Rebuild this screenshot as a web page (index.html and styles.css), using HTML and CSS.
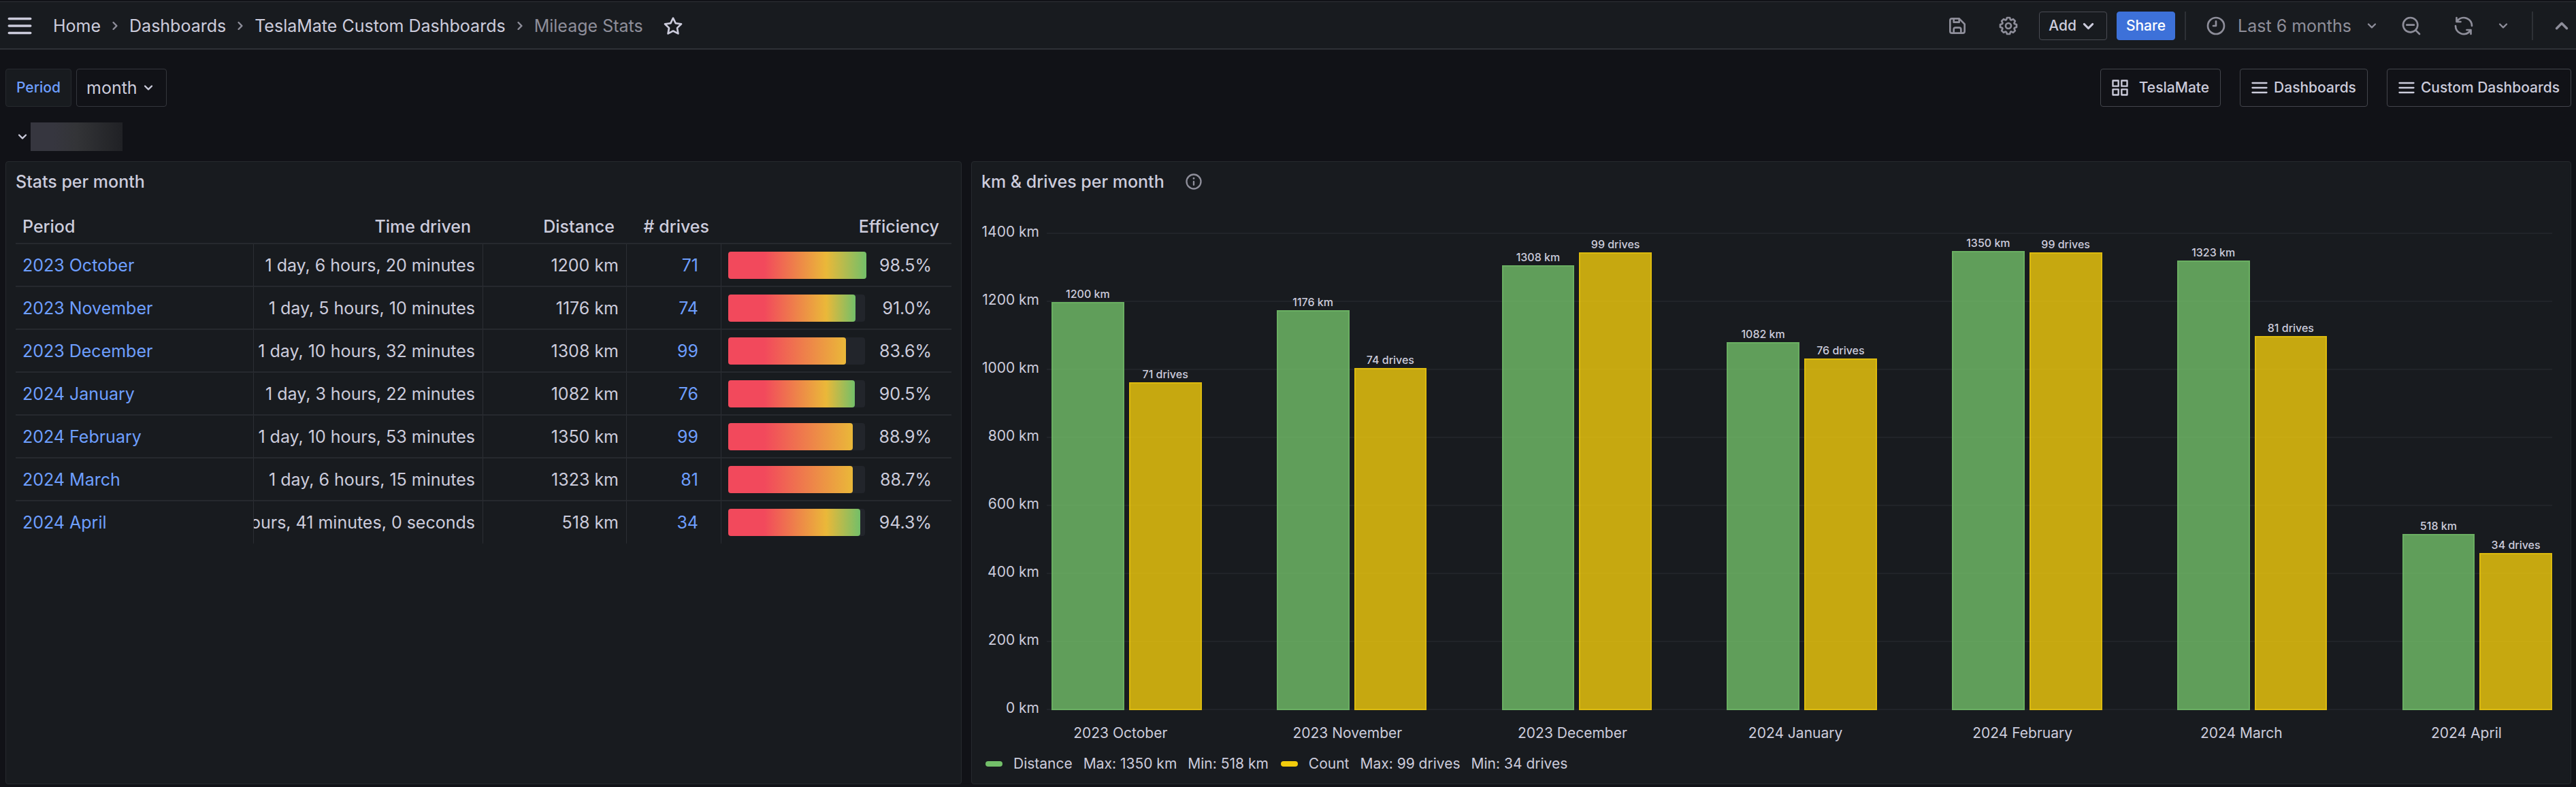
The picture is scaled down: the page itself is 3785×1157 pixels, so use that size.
FILE: index.html
```html
<!DOCTYPE html>
<html lang="en">
<head>
<meta charset="utf-8">
<meta name="viewport" content="width=device-width, initial-scale=1">
<title>Mileage Stats - TeslaMate Custom Dashboards</title>
<link rel="stylesheet" href="styles.css">
</head>
<body>
<svg class="sprite" aria-hidden="true">
  <symbol id="bars" viewBox="0 0 24 24"><path d="M3 5h18a1 1 0 0 1 0 2H3a1 1 0 0 1 0-2ZM3 11h18a1 1 0 0 1 0 2H3a1 1 0 0 1 0-2ZM3 17h18a1 1 0 0 1 0 2H3a1 1 0 0 1 0-2Z"/></symbol>
  <symbol id="down" viewBox="0 0 24 24"><path d="M17,9.17a1,1,0,0,0-1.41,0L12,12.71,8.46,9.17a1,1,0,0,0-1.41,0,1,1,0,0,0,0,1.42l4.24,4.24a1,1,0,0,0,1.42,0L17,10.59A1,1,0,0,0,17,9.17Z"/></symbol>
  <symbol id="up" viewBox="0 0 24 24"><path d="M17,13.41,12.71,9.17a1,1,0,0,0-1.42,0L7.05,13.41a1,1,0,0,0,0,1.42,1,1,0,0,0,1.41,0L12,11.29l3.54,3.54a1,1,0,0,0,.7.29,1,1,0,0,0,.71-.29A1,1,0,0,0,17,13.41Z"/></symbol>
  <symbol id="right" viewBox="0 0 24 24"><path d="M14.83,11.29,10.59,7.05a1,1,0,0,0-1.42,0,1,1,0,0,0,0,1.41L12.71,12,9.17,15.54a1,1,0,0,0,0,1.41,1,1,0,0,0,.71.29,1,1,0,0,0,.71-.29l4.24-4.24A1,1,0,0,0,14.83,11.29Z"/></symbol>
  <symbol id="star" viewBox="0 0 24 24"><path d="M22,9.67A1,1,0,0,0,21.14,9l-5.69-.83L12.9,3a1,1,0,0,0-1.8,0L8.55,8.16,2.86,9a1,1,0,0,0-.81.68,1,1,0,0,0,.25,1l4.13,4-1,5.68A1,1,0,0,0,6.9,21.44L12,18.77l5.1,2.67a.93.93,0,0,0,.46.12,1,1,0,0,0,.59-.19,1,1,0,0,0,.4-1l-1-5.68,4.13-4A1,1,0,0,0,22,9.67Zm-6.15,4a1,1,0,0,0-.29.88l.72,4.2-3.76-2a1.06,1.06,0,0,0-.94,0l-3.76,2,.72-4.2a1,1,0,0,0-.29-.88l-3-3,4.21-.61a1,1,0,0,0,.76-.55L12,5.7l1.88,3.82a1,1,0,0,0,.76.55l4.21.61Z"/></symbol>
  <symbol id="save" viewBox="0 0 24 24"><path d="M20.71,9.29l-6-6a1,1,0,0,0-.32-.21A1.09,1.09,0,0,0,14,3H6A3,3,0,0,0,3,6V18a3,3,0,0,0,3,3H18a3,3,0,0,0,3-3V10A1,1,0,0,0,20.71,9.29ZM9,5h4V7H9Zm6,14H9V16a1,1,0,0,1,1-1h4a1,1,0,0,1,1,1Zm4-1a1,1,0,0,1-1,1H17V16a3,3,0,0,0-3-3H10a3,3,0,0,0-3,3v3H6a1,1,0,0,1-1-1V6A1,1,0,0,1,6,5H7V8A1,1,0,0,0,8,9h6a1,1,0,0,0,1-1V6.41l4,4Z"/></symbol>
  <symbol id="cog" viewBox="0 0 24 24"><path d="M21.32,9.55l-1.89-.63.89-1.78A1,1,0,0,0,20.13,6L18,3.87a1,1,0,0,0-1.15-.19l-1.78.89-.63-1.89A1,1,0,0,0,13.5,2h-3a1,1,0,0,0-.95.68L8.92,4.57,7.14,3.68A1,1,0,0,0,6,3.87L3.87,6a1,1,0,0,0-.19,1.15l.89,1.78-1.89.63A1,1,0,0,0,2,10.5v3a1,1,0,0,0,.68.95l1.89.63-.89,1.78A1,1,0,0,0,3.87,18L6,20.13a1,1,0,0,0,1.15.19l1.78-.89.63,1.89a1,1,0,0,0,.95.68h3a1,1,0,0,0,.95-.68l.63-1.89,1.78.89A1,1,0,0,0,18,20.13L20.13,18a1,1,0,0,0,.19-1.15l-.89-1.78,1.89-.63A1,1,0,0,0,22,13.5v-3A1,1,0,0,0,21.32,9.55ZM20,12.78l-1.2.4A2,2,0,0,0,17.64,16l.57,1.14-1.1,1.1L16,17.64a2,2,0,0,0-2.79,1.16l-.4,1.2H11.22l-.4-1.2A2,2,0,0,0,8,17.64l-1.14.57-1.1-1.1L6.36,16A2,2,0,0,0,5.2,13.18L4,12.78V11.22l1.2-.4A2,2,0,0,0,6.36,8L5.79,6.89l1.1-1.1L8,6.36A2,2,0,0,0,10.82,5.2l.4-1.2h1.56l.4,1.2A2,2,0,0,0,16,6.36l1.14-.57,1.1,1.1L17.64,8a2,2,0,0,0,1.16,2.79l1.2.4ZM12,8a4,4,0,1,0,4,4A4,4,0,0,0,12,8Zm0,6a2,2,0,1,1,2-2A2,2,0,0,1,12,14Z"/></symbol>
  <symbol id="clock" viewBox="0 0 24 24"><path d="M12,2A10,10,0,1,0,22,12,10,10,0,0,0,12,2Zm0,18a8,8,0,1,1,8-8A8,8,0,0,1,12,20ZM12,6a1,1,0,0,0-1,1v4H9a1,1,0,0,0,0,2h3a1,1,0,0,0,1-1V7A1,1,0,0,0,12,6Z"/></symbol>
  <symbol id="zoom-out" viewBox="0 0 24 24"><path d="M21.71,20.29,18,16.61A9,9,0,1,0,16.61,18l3.68,3.68a1,1,0,0,0,1.42,0A1,1,0,0,0,21.71,20.29ZM11,18a7,7,0,1,1,7-7A7,7,0,0,1,11,18Zm4-8H7a1,1,0,0,0,0,2h8a1,1,0,0,0,0-2Z"/></symbol>
  <symbol id="sync" viewBox="0 0 24 24"><path d="M19.91,15.51H15.38a1,1,0,0,0,0,2h2.4A8,8,0,0,1,4,12a1,1,0,0,0-2,0,10,10,0,0,0,16.88,7.23V21a1,1,0,0,0,2,0V16.5A1,1,0,0,0,19.91,15.51ZM12,2A10,10,0,0,0,5.12,4.77V3a1,1,0,0,0-2,0V7.5a1,1,0,0,0,1,1h4.5a1,1,0,0,0,0-2H6.22A8,8,0,0,1,20,12a1,1,0,0,0,2,0A10,10,0,0,0,12,2Z"/></symbol>
  <symbol id="apps" viewBox="0 0 24 24"><path d="M10,13H3a1,1,0,0,0-1,1v7a1,1,0,0,0,1,1h7a1,1,0,0,0,1-1V14A1,1,0,0,0,10,13ZM9,20H4V15H9ZM21,2H14a1,1,0,0,0-1,1v7a1,1,0,0,0,1,1h7a1,1,0,0,0,1-1V3A1,1,0,0,0,21,2ZM20,9H15V4h5Zm1,4H14a1,1,0,0,0-1,1v7a1,1,0,0,0,1,1h7a1,1,0,0,0,1-1V14A1,1,0,0,0,21,13Zm-1,7H15V15h5ZM10,2H3A1,1,0,0,0,2,3v7a1,1,0,0,0,1,1h7a1,1,0,0,0,1-1V3A1,1,0,0,0,10,2ZM9,9H4V4H9Z"/></symbol>
  <symbol id="info" viewBox="0 0 24 24"><path d="M12,2A10,10,0,1,0,22,12,10,10,0,0,0,12,2Zm0,18a8,8,0,1,1,8-8A8,8,0,0,1,12,20ZM12,11a1,1,0,0,0-1,1v4a1,1,0,0,0,2,0V12A1,1,0,0,0,12,11Zm0-4.25A1.25,1.25,0,1,0,13.25,8,1.25,1.25,0,0,0,12,6.75Z"/></symbol>
</svg>

<header class="topbar">
  <button class="icon-btn" aria-label="Open menu"><svg class="icon xl"><use href="#bars"/></svg></button>
  <nav class="crumbs" aria-label="Breadcrumbs">
    <a href="#">Home</a>
    <svg class="icon"><use href="#right"/></svg>
    <a href="#">Dashboards</a>
    <svg class="icon"><use href="#right"/></svg>
    <a href="#">TeslaMate Custom Dashboards</a>
    <svg class="icon"><use href="#right"/></svg>
    <span class="current">Mileage Stats</span>
  </nav>
  <button class="icon-btn star" aria-label="Mark as favorite"><svg class="icon md"><use href="#star"/></svg></button>
  <div class="actions">
    <button class="icon-btn muted save" aria-label="Save dashboard"><svg class="icon md"><use href="#save"/></svg></button>
    <button class="icon-btn muted cog" aria-label="Dashboard settings"><svg class="icon md"><use href="#cog"/></svg></button>
    <button class="btn add">Add <svg class="icon lg"><use href="#down"/></svg></button>
    <button class="btn primary">Share</button>
    <span class="divider"></span>
    <button class="icon-btn muted range"><svg class="icon md"><use href="#clock"/></svg>Last 6 months<svg class="icon"><use href="#down"/></svg></button>
    <button class="icon-btn muted zoom" aria-label="Zoom out time range"><svg class="icon md"><use href="#zoom-out"/></svg></button>
    <button class="icon-btn muted refresh" aria-label="Refresh"><svg class="icon md"><use href="#sync"/></svg></button>
    <button class="icon-btn muted interval" aria-label="Refresh interval"><svg class="icon"><use href="#down"/></svg></button>
    <span class="divider"></span>
    <button class="icon-btn muted collapse" aria-label="Hide top bar"><svg class="icon xl"><use href="#up"/></svg></button>
  </div>
</header>

<main class="page">
  <div class="controls">
    <div class="variable">
      <label for="period">Period</label>
      <div class="select">
        <select id="period"><option>month</option></select>
        <svg class="icon"><use href="#down"/></svg>
      </div>
    </div>
    <nav class="links" aria-label="Dashboard links">
      <a class="link-btn wide" href="#"><svg class="icon"><use href="#apps"/></svg>TeslaMate</a>
      <a class="link-btn" href="#"><svg class="icon"><use href="#bars"/></svg>Dashboards</a>
      <a class="link-btn" href="#"><svg class="icon"><use href="#bars"/></svg>Custom Dashboards</a>
    </nav>
  </div>

  <div class="row-head">
    <button class="icon-btn" aria-label="Collapse row"><svg class="icon"><use href="#down"/></svg></button>
    <span class="redacted"></span>
  </div>

  <div class="panels">
    <section class="panel stats">
      <h2>Stats per month</h2>
      <table>
        <colgroup><col class="c-period"><col class="c-time"><col class="c-dist"><col class="c-drives"><col></colgroup>
        <thead><tr><th>Period</th><th>Time driven</th><th>Distance</th><th># drives</th><th>Efficiency</th></tr></thead>
        <tbody>
          <tr><td><a href="#">2023 October</a></td><td><div class="clip">1 day, 6 hours, 20 minutes</div></td><td>1200 km</td><td><a href="#">71</a></td><td><div class="gauge"><div class="track"><div class="fill high" style="width:101%"></div></div>98.5%</div></td></tr>
          <tr><td><a href="#">2023 November</a></td><td><div class="clip">1 day, 5 hours, 10 minutes</div></td><td>1176 km</td><td><a href="#">74</a></td><td><div class="gauge"><div class="track"><div class="fill high" style="width:93%"></div></div>91.0%</div></td></tr>
          <tr><td><a href="#">2023 December</a></td><td><div class="clip">1 day, 10 hours, 32 minutes</div></td><td>1308 km</td><td><a href="#">99</a></td><td><div class="gauge"><div class="track"><div class="fill" style="width:86%"></div></div>83.6%</div></td></tr>
          <tr><td><a href="#">2024 January</a></td><td><div class="clip">1 day, 3 hours, 22 minutes</div></td><td>1082 km</td><td><a href="#">76</a></td><td><div class="gauge"><div class="track"><div class="fill high" style="width:92.5%"></div></div>90.5%</div></td></tr>
          <tr><td><a href="#">2024 February</a></td><td><div class="clip">1 day, 10 hours, 53 minutes</div></td><td>1350 km</td><td><a href="#">99</a></td><td><div class="gauge"><div class="track"><div class="fill" style="width:91%"></div></div>88.9%</div></td></tr>
          <tr><td><a href="#">2024 March</a></td><td><div class="clip">1 day, 6 hours, 15 minutes</div></td><td>1323 km</td><td><a href="#">81</a></td><td><div class="gauge"><div class="track"><div class="fill" style="width:91%"></div></div>88.7%</div></td></tr>
          <tr><td><a href="#">2024 April</a></td><td><div class="clip">hours, 41 minutes, 0 seconds</div></td><td>518 km</td><td><a href="#">34</a></td><td><div class="gauge"><div class="track"><div class="fill high" style="width:96.5%"></div></div>94.3%</div></td></tr>
        </tbody>
      </table>
    </section>

    <section class="panel chart-panel">
      <h2>km &amp; drives per month <svg class="icon info"><use href="#info"/></svg></h2>
      <div class="chart">
        <div class="axis"><span>1400 km</span><span>1200 km</span><span>1000 km</span><span>800 km</span><span>600 km</span><span>400 km</span><span>200 km</span><span>0 km</span></div>
        <div class="grid-lines"><i></i><i></i><i></i><i></i><i></i><i></i><i></i><i></i></div>
        <div class="bars">
          <div class="group"><div class="col">1200 km<b class="km" style="height:85.7%"></b></div><div class="col">71 drives<b class="count" style="height:68.9%"></b></div></div>
          <div class="group"><div class="col">1176 km<b class="km" style="height:84%"></b></div><div class="col">74 drives<b class="count" style="height:71.9%"></b></div></div>
          <div class="group"><div class="col">1308 km<b class="km" style="height:93.4%"></b></div><div class="col">99 drives<b class="count" style="height:96.1%"></b></div></div>
          <div class="group"><div class="col">1082 km<b class="km" style="height:77.3%"></b></div><div class="col">76 drives<b class="count" style="height:73.8%"></b></div></div>
          <div class="group"><div class="col">1350 km<b class="km" style="height:96.4%"></b></div><div class="col">99 drives<b class="count" style="height:96.1%"></b></div></div>
          <div class="group"><div class="col">1323 km<b class="km" style="height:94.5%"></b></div><div class="col">81 drives<b class="count" style="height:78.6%"></b></div></div>
          <div class="group"><div class="col">518 km<b class="km" style="height:37%"></b></div><div class="col">34 drives<b class="count" style="height:33%"></b></div></div>
        </div>
        <div class="months"><span>2023 October&nbsp;&nbsp;</span><span>2023 November&nbsp;</span><span>2023 December&nbsp;</span><span>2024 January&nbsp;&nbsp;</span><span>2024 February&nbsp;</span><span>2024 March&nbsp;&nbsp;&nbsp;&nbsp;</span><span>2024 April&nbsp;&nbsp;&nbsp;&nbsp;</span></div>
      </div>
      <ul class="legend">
        <li><i class="swatch km"></i><span>Distance</span><span>Max: 1350 km</span><span>Min: 518 km</span></li>
        <li><i class="swatch count"></i><span>Count</span><span>Max: 99 drives</span><span>Min: 34 drives</span></li>
      </ul>
    </section>
  </div>
</main>
</body>
</html>
```
FILE: styles.css
```css
:root {
  --canvas: #111217;
  --surface: #181b1f;
  --line: #26292e;
  --border: #2e3136;
  --text: #ccccdc;
  --muted: #8e8e9a;
  --link: #6e9fff;
  --green: #73bf69;
  --yellow: #f2cc0c;
}

* { box-sizing: border-box; }

body {
  margin: 0;
  background: var(--canvas);
  color: var(--text);
  font: 400 25px/36px Inter, "Liberation Sans", sans-serif;
}

a { color: inherit; text-decoration: none; }

button, select {
  font: inherit;
  color: inherit;
  background: none;
  border: 0;
  padding: 0;
  margin: 0;
  cursor: pointer;
}

.sprite { display: none; }

.icon { width: 28px; height: 28px; fill: currentColor; flex: none; display: block; }
.icon.md { width: 32px; height: 32px; }
.icon.lg { width: 35px; height: 35px; }
.icon.xl { width: 42px; height: 42px; }

.icon-btn { display: flex; align-items: center; }
.muted { color: var(--muted); }

/* Top bar */
.topbar {
  display: flex;
  align-items: center;
  height: 73px;
  padding: 3px 0 0 8px;
  background: var(--surface);
  border-top: 2px solid var(--canvas);
  border-bottom: 2px solid var(--border);
  box-shadow: inset 0 1px var(--border);
}
.crumbs { display: flex; align-items: center; gap: 7px; margin-left: 28px; }
.crumbs .icon { color: var(--muted); }
.current { color: var(--muted); }
.star { margin-left: 28px; }
.actions { display: flex; align-items: center; margin-left: auto; }
.cog { margin-left: 43px; }
.btn {
  display: flex;
  align-items: center;
  height: 42px;
  padding: 0 13px;
  border: 1px solid #4a4c53;
  border-radius: 4px;
  font-size: 21px;
  font-weight: 500;
}
.add { margin-left: 29px; padding-right: 9px; }
.primary { margin-left: 14px; background: #3d71d9; border-color: #3d71d9; color: #fff; }
.divider { width: 2px; height: 42px; margin-left: 14px; background: var(--border); }
.range { margin-left: 28px; gap: 16px; }
.zoom { margin-left: 28px; }
.refresh { margin-left: 45px; }
.interval { margin-left: 28px; }
.interval + .divider { margin-left: 28px; }
.collapse { margin-left: 21px; }

/* Variables and dashboard links */
.page { padding: 28px 7px 3px 8px; }
.controls { display: flex; justify-content: space-between; }
.variable, .links { display: flex; }
.variable { gap: 7px; }
.variable label {
  display: flex;
  align-items: center;
  height: 56px;
  padding: 0 15px;
  background: var(--surface);
  border: 1px solid var(--line);
  border-radius: 4px;
  color: var(--link);
  font-size: 21px;
  font-weight: 500;
}
.select {
  display: grid;
  align-items: center;
  height: 56px;
  border: 1px solid #34363c;
  border-radius: 4px;
}
.select select {
  grid-area: 1 / 1;
  appearance: none;
  height: 54px;
  padding: 0 42px 0 14px;
}
.select .icon { grid-area: 1 / 1; justify-self: end; margin-right: 12px; pointer-events: none; }
.links { gap: 28px; }
.link-btn {
  display: flex;
  align-items: center;
  gap: 7px;
  height: 56px;
  padding: 0 16px 0 14px;
  border: 1px solid #43454c;
  border-radius: 4px;
  font-size: 21px;
  font-weight: 500;
}
.link-btn.wide { gap: 14px; }

.row-head { display: flex; align-items: center; height: 43px; margin: 22px 0 15px 11px; }
.redacted { width: 135px; height: 42px; margin-left: -2px; background: linear-gradient(90deg, #36363f 25%, #333437 50%, #202125); }

/* Panels */
.panels { display: grid; grid-template-columns: repeat(24, minmax(0, 1fr)); gap: 14px; }
.stats { grid-column: span 9; }
.chart-panel { grid-column: span 15; }
.panel { background: var(--surface); border: 1px solid var(--line); border-radius: 4px; padding: 0 14px; }
.panel h2 {
  display: flex;
  align-items: center;
  height: 58px;
  margin: 0 0 12px;
  font-size: 25px;
  font-weight: 500;
}
.info { margin-left: 29px; color: var(--muted); }

/* Stats table */
table { width: 100%; table-layout: fixed; border-collapse: separate; border-spacing: 0; }
.c-period { width: 350px; }
.c-time { width: 337px; }
.c-dist { width: 211px; }
.c-drives { width: 139px; }
th { height: 51px; padding: 0 18px; font-weight: 500; text-align: right; border-bottom: 2px solid var(--line); }
td { height: 63px; padding: 0 11px 0 0; text-align: right; white-space: nowrap; border-bottom: 2px solid var(--line); border-right: 1px solid #2c2f34; }
th:first-child, td:first-child { text-align: left; padding: 0 10px; }
td:nth-child(4) { padding-right: 33px; }
td:last-child { padding: 0 29px 0 10px; border-right: 0; }
tbody tr:last-child td { border-bottom-color: transparent; }
td a { color: var(--link); }
.clip { display: flex; justify-content: flex-end; overflow: hidden; }
.gauge { display: flex; align-items: center; justify-content: space-between; }
.track { width: 201px; height: 40px; border-radius: 4px; background: #22252b; }
.fill { height: 100%; border-radius: 4px; background: linear-gradient(90deg, #f2495c 53px, #eab839 100%); }
.fill.high { background: linear-gradient(90deg, #f2495c 53px, #eab839 144px, #73bf69 100%); }

/* Bar chart */
.chart {
  display: grid;
  grid-template-columns: 85px minmax(0, 1fr);
  column-gap: 11px;
  padding: 34px 13px 0 0;
  font-size: 21px;
  line-height: 28px;
}
.axis, .grid-lines { display: flex; flex-direction: column; justify-content: space-between; height: 702px; }
.axis { margin-top: -2px; }
.axis span { display: flex; align-items: center; justify-content: flex-end; height: 2px; white-space: nowrap; }
.grid-lines { grid-area: 1 / 2; }
.grid-lines i { height: 2px; background: #212429; }
.bars { grid-area: 1 / 2; align-self: end; display: flex; justify-content: space-between; height: 700px; padding-left: 7px; }
.group { display: flex; gap: 7px; width: 10%; }
.col {
  flex: 1;
  display: flex;
  flex-direction: column;
  justify-content: flex-end;
  align-items: center;
  font-size: 16px;
  line-height: 24px;
  font-weight: 500;
  white-space: nowrap;
}
.col b { width: 100%; flex: none; border: 2px solid; }
b.km { background: rgba(115, 191, 105, .8); border-color: rgba(115, 191, 105, .5); }
b.count { background: rgba(242, 204, 12, .8); border-color: rgba(242, 204, 12, .5); }
.months { grid-column: 2; display: flex; justify-content: space-between; padding: 20px 4px 0 4px; }
.months span { display: flex; justify-content: center; width: 10%; white-space: nowrap; }

.legend { display: flex; gap: 18px; margin: 0; padding: 17px 7px 15px 6px; list-style: none; font-size: 21px; line-height: 28px; }
.legend li { display: flex; align-items: center; gap: 16px; }
.swatch { width: 25px; height: 8px; border-radius: 4px; }
.swatch.km { background: var(--green); }
.swatch.count { background: var(--yellow); }
```
